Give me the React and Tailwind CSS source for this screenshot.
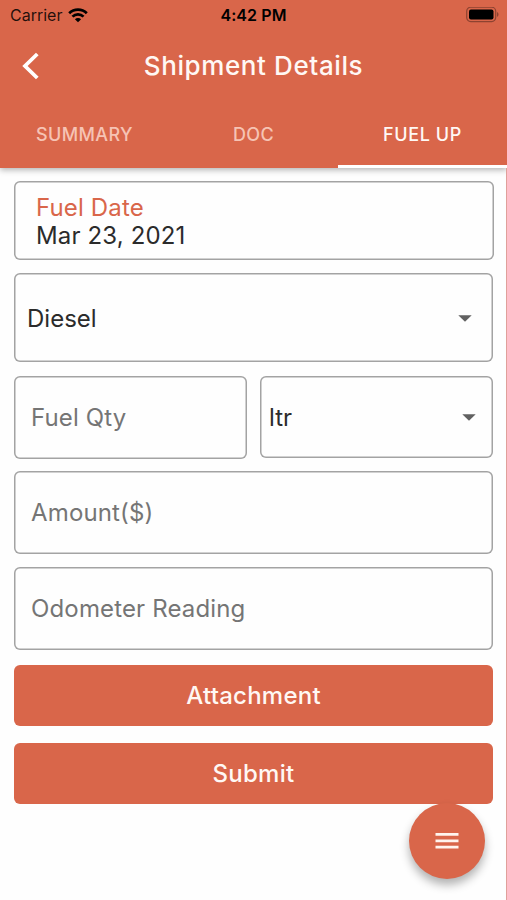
const outline = "rounded-md shadow-[inset_0_0_0_1.5px_#a3a3a3]";

function Caret() {
  return (
    <svg className="h-[7px] w-[14px] shrink-0" viewBox="0 0 14 7" fill="#616161">
      <path d="M0.3 0.2H13.7L7 6.8Z" />
    </svg>
  );
}

function StatusBar() {
  return (
    <div className="grid h-[30px] grid-cols-3 items-center pl-[10px] pr-2 text-black">
      <div className="flex items-center gap-[6px]">
        <span className="text-[16px] leading-5 text-black/85">Carrier</span>
        <svg className="h-[15px] w-[20px]" viewBox="0 0 21 16">
          <path d="M10.5 15.3 7.2 12a4.7 4.7 0 0 1 6.6 0Z" fill="#000" />
          <path d="M4.6 9.2a8.4 8.4 0 0 1 11.8 0" fill="none" stroke="#000" strokeWidth="2.9" />
          <path d="M1.1 5.5a13.4 13.4 0 0 1 18.8 0" fill="none" stroke="#000" strokeWidth="2.9" />
        </svg>
      </div>
      <span className="-ml-[2px] text-center text-[16px] font-semibold leading-5 tracking-[0.1px]">4:42 PM</span>
      <svg className="h-4 w-[33px] justify-self-end" viewBox="0 0 33 16">
        <rect x="0.7" y="0.2" width="29" height="14.4" rx="4" fill="none" stroke="#000" strokeOpacity="0.35" strokeWidth="1.2" />
        <rect x="3" y="2.5" width="24.5" height="10" rx="2" fill="#000" />
        <path d="M31 5c2 .8 2 4 0 4.8Z" fill="#000" fillOpacity="0.35" />
      </svg>
    </div>
  );
}

function Field({ label }) {
  return (
    <div className={`flex h-[83px] items-center pl-[17px] pr-4 ${outline}`}>
      <span className="text-[24px] leading-7 tracking-[0.15px] text-[#757575]">{label}</span>
    </div>
  );
}

function Action({ label }) {
  return (
    <button className="flex h-[61px] items-center justify-center rounded-md bg-[#d9664a] text-[24px] font-[550] leading-7 tracking-[0.25px] text-[#fff8f4]">
      {label}
    </button>
  );
}

export default function App() {
  return (
    <div className="relative flex h-[900px] w-[507px] flex-col overflow-hidden bg-[#fefefe] font-['Inter','Liberation_Sans',sans-serif]">
      <header className="flex h-[168px] shrink-0 flex-col bg-[#d9664a] shadow-[0_2px_6px_rgba(0,0,0,0.3)]">
        <StatusBar />
        <div className="grid h-[72px] grid-cols-[60px_1fr_60px] items-center">
          <svg className="ml-[22px] h-7 w-[18px]" viewBox="0 0 18 28" fill="none" stroke="#fff" strokeWidth="3.8">
            <path d="M15.3 2 3 14 15.3 26" />
          </svg>
          <h1 className="text-center text-[26px] font-[550] leading-8 tracking-[0.6px] text-[#fff8f4]">Shipment Details</h1>
        </div>
        <nav className="grid h-[66px] grid-cols-3 text-[18px] font-medium leading-6 tracking-[0.4px] text-[#f6c3b4]">
          <div className="flex items-center justify-center">SUMMARY</div>
          <div className="flex items-center justify-center">DOC</div>
          <div className="flex items-center justify-center border-b-[3px] border-white pt-[3px] font-[550] tracking-[0.6px] text-[#fff8f4]">FUEL UP</div>
        </nav>
      </header>
      <main className="flex flex-1 flex-col border-r border-[#e0a09a] pl-[14px] pr-[13px] pt-[13px]">
        <div className={`-mr-px flex h-[79px] flex-col justify-center pl-[22px] pt-[2px] text-[24px] leading-[28px] tracking-[0.15px] ${outline}`}>
          <span className="text-[#d9664a]">Fuel Date</span>
          <span className="text-[#2b2b2b]">Mar 23, 2021</span>
        </div>
        <div className={`mt-[13px] flex h-[89px] items-center justify-between pl-[13px] pr-[21px] pt-[2px] ${outline}`}>
          <span className="text-[24px] leading-7 text-[#2b2b2b]">Diesel</span>
          <Caret />
        </div>
        <div className="mt-[14px] grid grid-cols-[233px_233px] items-start justify-between">
          <Field label="Fuel Qty" />
          <div className={`flex h-[82px] items-center justify-between pl-[9px] pr-[17px] pt-px ${outline}`}>
            <span className="text-[24px] leading-7 text-[#2b2b2b]">ltr</span>
            <Caret />
          </div>
        </div>
        <div className="mt-[12px] flex flex-col gap-[13px]">
          <Field label="Amount($)" />
          <Field label="Odometer Reading" />
        </div>
        <div className="mt-[15px] flex flex-col gap-[17px]">
          <Action label="Attachment" />
          <Action label="Submit" />
        </div>
      </main>
      <button className="absolute left-[409px] top-[803px] flex size-[76px] items-center justify-center rounded-full bg-[#d9664a] shadow-[0_6px_10px_rgba(0,0,0,0.3)]">
        <svg className="h-4 w-6" viewBox="0 0 24 16" fill="#fff4ee">
          <path d="M0.5 0h23v2.7h-23zM0.5 6.5h23v2.7h-23zM0.5 12.8h23v2.7h-23z" />
        </svg>
      </button>
    </div>
  );
}
